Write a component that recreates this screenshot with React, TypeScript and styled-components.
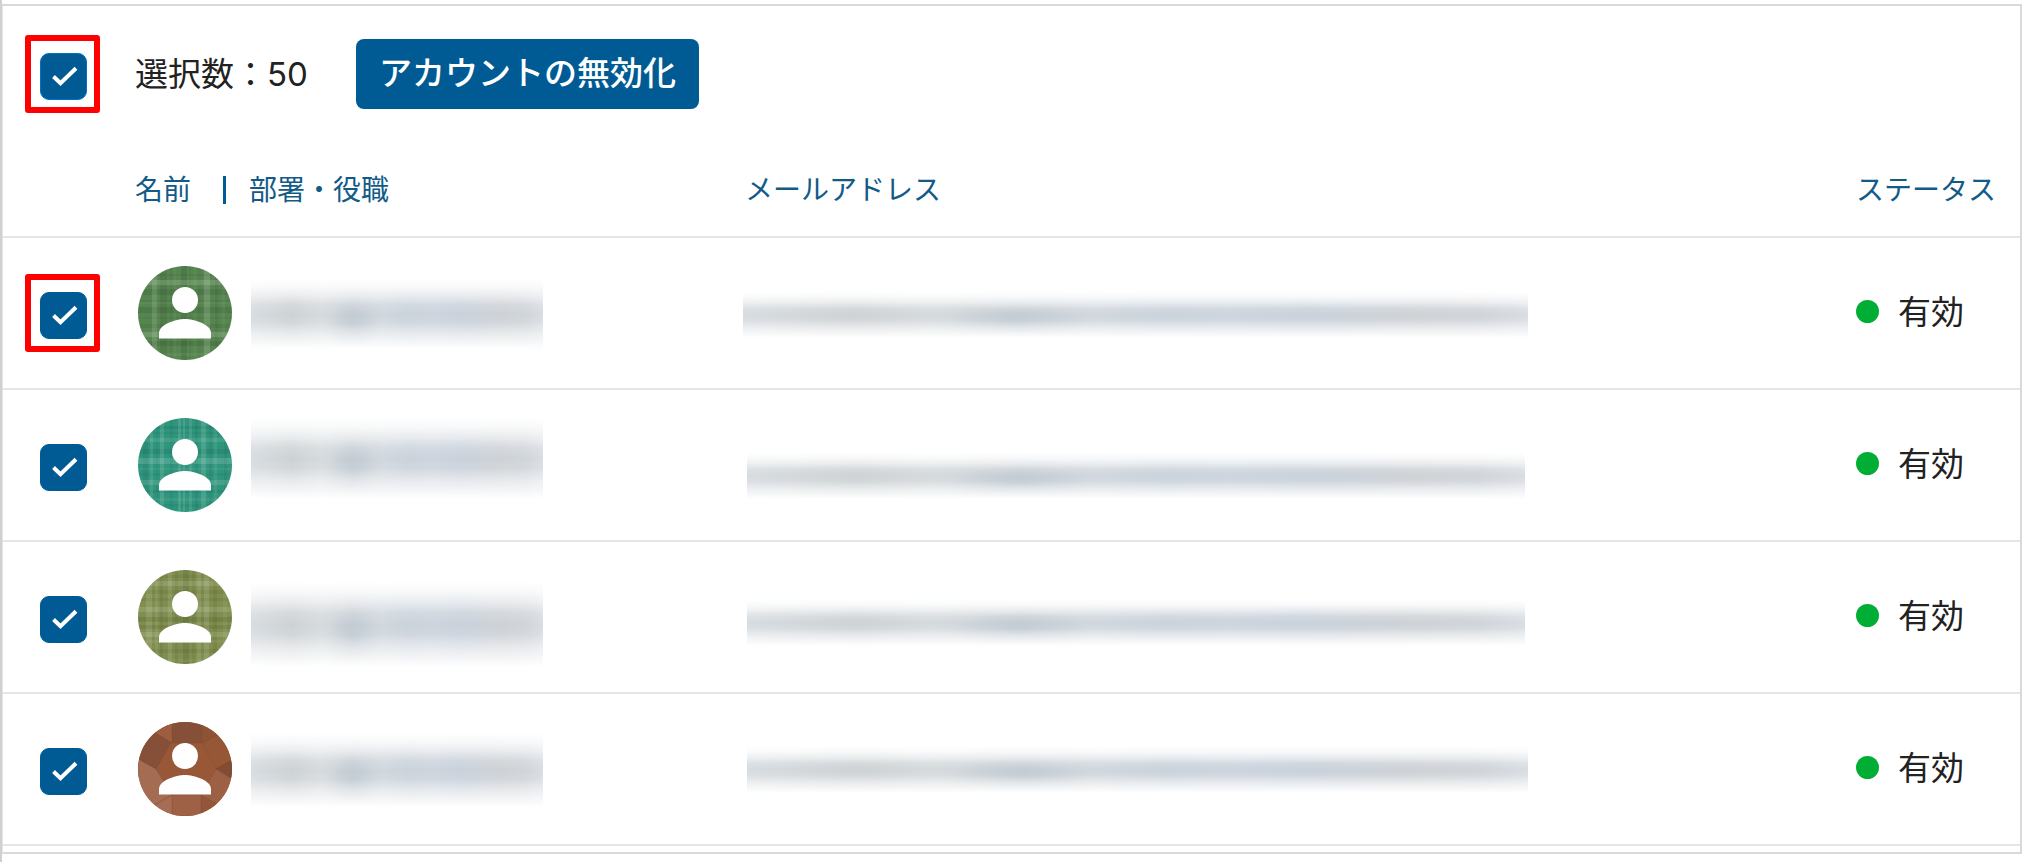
import React, { useState } from "react";
import styled, { createGlobalStyle, css } from "styled-components";

const GlobalStyle = createGlobalStyle`
  *, *::before, *::after { box-sizing: border-box; }
  body {
    margin: 0;
    background: #fff;
    color: #222;
    font-family: Inter, "Noto Sans CJK JP", sans-serif;
    font-size: 33px;
    line-height: 48px;
  }
`;

const Page = styled.main`
  min-height: 100vh;
  padding: 4px 6px 8px 0;
  border-left: 2px solid #d0d0d0;
`;

const Panel = styled.section`
  border: 2px solid #d9d9d9;
  border-left: 1px solid #e4e4e4;
  padding-bottom: 6px;
`;

const Toolbar = styled.div`
  display: flex;
  align-items: center;
  padding: 33px 24px 35px 0;
`;

const CheckColumn = styled.div`
  flex: none;
  width: 132px;
  padding: 4px 0 0 37px;
`;

const SelectionCount = styled.p`
  margin: 0 48px 0 0;
`;

const PrimaryButton = styled.button`
  height: 70px;
  padding: 0 23px 2px;
  border: 0;
  border-radius: 8px;
  background: #005b94;
  color: #fff;
  font: inherit;
  font-weight: 500;
  cursor: pointer;
`;

const Tick = styled.label<{ $marked?: boolean }>`
  position: relative;
  display: block;
  width: 47px;
  height: 47px;

  ${(p) =>
    p.$marked &&
    css`
      &::after {
        content: "";
        position: absolute;
        inset: -18px -13px -13px -15px;
        border: 6px solid #f00;
        border-radius: 3px;
        pointer-events: none;
      }
    `}
`;

const TickInput = styled.input<{ $focused?: boolean }>`
  display: block;
  appearance: none;
  width: 47px;
  height: 47px;
  margin: 0;
  border: 1px solid ${(p) => (p.$focused ? "#0070c4" : "#005b94")};
  border-radius: 9px;
  background: #fff;
  cursor: pointer;

  &:checked { background: #005b94; }
`;

const TickMark = styled.svg`
  position: absolute;
  inset: 0;
  pointer-events: none;
`;

const UserTable = styled.table`
  width: 100%;
  border-collapse: separate;
  border-spacing: 0;
  table-layout: fixed;
`;

const Column = styled.col<{ $width?: number }>`
  width: ${(p) => (p.$width ? `${p.$width}px` : "auto")};
`;

const HeadCell = styled.th`
  height: 94px;
  padding: 0;
  border-bottom: 2px solid #e5e5e5;
  color: #125a87;
  font-size: 28px;
  font-weight: 400;
  text-align: left;
  white-space: nowrap;
`;

const HeadGroup = styled.div`
  display: flex;
  align-items: center;
  gap: 32px;

  span + span::before {
    content: "";
    display: inline-block;
    width: 3px;
    height: 28px;
    margin-right: 23px;
    background: #005b94;
    vertical-align: -4px;
  }
`;

const Cell = styled.td`
  height: 152px;
  padding: 0;
  border-bottom: 2px solid #e5e5e5;
`;

const Person = styled.div`
  display: flex;
  align-items: center;
  gap: 19px;
  padding-left: 3px;
`;

const AvatarSvg = styled.svg`
  flex: none;
  display: block;
`;

const Redacted = styled.div<{ $width: number; $height: number; $shift: number; $indent?: number }>`
  width: ${(p) => p.$width}px;
  max-width: 100%;
  height: ${(p) => p.$height}px;
  margin-top: ${(p) => p.$shift}px;
  margin-left: ${(p) => p.$indent ?? 0}px;
  background:
    radial-gradient(ellipse 9% 42% at 35% 70%, rgba(176, 190, 202, 0.5), transparent),
    linear-gradient(90deg, #d7dce0, #cdd2d5 14%, #d5dadd 24%, #cbd1d7 35%, #d0d7dd 45%,
      #cad2db 54%, #cdd4dd 62%, #c9d1db 71%, #ced2d6 86%, #d0d5da 94%, #d9dde3);
  mask-image: linear-gradient(transparent 2%, rgba(0, 0, 0, 0.14) 14%, rgba(0, 0, 0, 0.46) 27%,
    rgba(0, 0, 0, 0.86) 39%, #000 52%, rgba(0, 0, 0, 0.9) 63%, rgba(0, 0, 0, 0.5) 77%,
    rgba(0, 0, 0, 0.22) 90%, transparent);
`;

const Status = styled.div`
  display: flex;
  align-items: center;
  gap: 19px;
  padding-bottom: 3px;
  white-space: nowrap;

  &::before {
    content: "";
    width: 23px;
    height: 23px;
    border-radius: 50%;
    background: #00ad35;
  }
`;

type Stripe = [position: number, width: number, opacity: number];

interface Plaid {
  base: string;
  dark: string;
  lightColumns: Stripe[];
  darkColumns: Stripe[];
  lightRows: Stripe[];
  darkRows: Stripe[];
}

interface User {
  id: string;
  plaid?: Plaid;
  name: { height: number; shift: number };
  email: { width: number; height: number; shift: number; indent: number };
}

const users: User[] = [
  {
    id: "u1",
    plaid: {
      base: "#578550",
      dark: "#2f4a2e",
      lightColumns: [[14, 5, 0.12], [66, 6, 0.14], [36, 2, 0.04], [56, 2, 0.04], [84, 3, 0.05]],
      darkColumns: [[22, 7, 0.14], [43, 6, 0.2], [32, 2, 0.1], [51, 2, 0.1], [60, 3, 0.08], [77, 3, 0.12]],
      lightRows: [[14, 5, 0.14], [66, 5, 0.14], [36, 2, 0.04], [87, 3, 0.05]],
      darkRows: [[23, 6, 0.2], [41, 6, 0.2], [34, 2, 0.12], [51, 2, 0.1], [58, 4, 0.15], [75, 5, 0.2], [8, 2, 0.12]],
    },
    name: { height: 72, shift: 0 },
    email: { width: 785, height: 48, shift: 2, indent: -2 },
  },
  {
    id: "u2",
    plaid: {
      base: "#2f957c",
      dark: "#17614f",
      lightColumns: [[12, 3, 0.1], [22, 4, 0.12], [40, 3, 0.12], [45, 2, 0.12], [51, 3, 0.1], [63, 5, 0.13], [76, 3, 0.08]],
      darkColumns: [[5, 5, 0.16], [18, 2, 0.1], [32, 3, 0.1], [57, 3, 0.16], [71, 3, 0.12], [86, 3, 0.12]],
      lightRows: [[20, 4, 0.1], [40, 6, 0.14], [62, 5, 0.12], [50, 2, 0.06], [80, 3, 0.06]],
      darkRows: [[8, 3, 0.2], [14, 2, 0.12], [31, 5, 0.2], [55, 3, 0.1], [72, 3, 0.15], [86, 3, 0.12]],
    },
    name: { height: 84, shift: -16 },
    email: { width: 778, height: 48, shift: 20, indent: 2 },
  },
  {
    id: "u3",
    plaid: {
      base: "#808f50",
      dark: "#4b562a",
      lightColumns: [[8, 6, 0.11], [17, 3, 0.08], [30, 4, 0.1], [59, 4, 0.1], [66, 5, 0.12], [85, 4, 0.06]],
      darkColumns: [[22, 3, 0.14], [37, 3, 0.12], [45, 6, 0.2], [54, 3, 0.12], [75, 4, 0.15]],
      lightRows: [[11, 5, 0.12], [37, 5, 0.12], [62, 5, 0.12], [70, 3, 0.06], [89, 3, 0.05]],
      darkRows: [[5, 3, 0.12], [20, 4, 0.15], [28, 3, 0.15], [47, 5, 0.24], [55, 4, 0.2], [79, 4, 0.15]],
    },
    name: { height: 88, shift: 12 },
    email: { width: 778, height: 48, shift: 10, indent: 2 },
  },
  {
    id: "u4",
    name: { height: 76, shift: 0 },
    email: { width: 781, height: 48, shift: 0, indent: 2 },
  },
];

function PlaidFill({ plaid }: { plaid: Plaid }) {
  return (
    <>
      <rect width="94" height="94" fill={plaid.base} />
      {plaid.darkColumns.map(([x, w, o]) => (
        <rect key={`dc${x}`} x={x} width={w} height="94" fill={plaid.dark} opacity={o} />
      ))}
      {plaid.darkRows.map(([y, h, o]) => (
        <rect key={`dr${y}`} y={y} width="94" height={h} fill={plaid.dark} opacity={o} />
      ))}
      {plaid.lightColumns.map(([x, w, o]) => (
        <rect key={`lc${x}`} x={x} width={w} height="94" fill="#fff" opacity={o} />
      ))}
      {plaid.lightRows.map(([y, h, o]) => (
        <rect key={`lr${y}`} y={y} width="94" height={h} fill="#fff" opacity={o} />
      ))}
    </>
  );
}

function FacetFill() {
  return (
    <g stroke="#7f4a32" strokeOpacity="0.35" strokeWidth="1">
      <rect width="94" height="94" fill="#985838" />
      <path d="M34 0H64V21H34Z" fill="#855037" />
      <path d="M17 11 34 0V21Z" fill="#9c5d41" />
      <path d="M17 11 33 21 18 47 0 37V11Z" fill="#855037" />
      <path d="M64 0 83 11 64 21Z" fill="#8e5336" />
      <path d="M83 11 94 11V38L78 47 64 21Z" fill="#965737" />
      <path d="M78 47 94 38V57Z" fill="#824c34" />
      <path d="M78 47 94 57V94H83L63 73Z" fill="#9d6045" />
      <path d="M63 73 83 84 63 94Z" fill="#94563a" />
      <path d="M34 73H63V94H34Z" fill="#9e6146" />
      <path d="M0 37 18 47 34 73 15 84 0 94Z" fill="#a46c53" />
      <path d="M15 84 34 73V94H15Z" fill="#a56d55" />
    </g>
  );
}

function Avatar({ user }: { user: User }) {
  const clip = `avatar-${user.id}`;
  return (
    <AvatarSvg width="94" height="94" viewBox="0 0 94 94" aria-hidden="true">
      <clipPath id={clip}>
        <circle cx="47" cy="47" r="47" />
      </clipPath>
      <g clipPath={`url(#${clip})`}>{user.plaid ? <PlaidFill plaid={user.plaid} /> : <FacetFill />}</g>
      <circle cx="47" cy="34" r="13" fill="#fff" />
      <path d="M21 72.5V67C21 58.5 38 53 47 53S73 58.5 73 67V72.5Z" fill="#fff" />
    </AvatarSvg>
  );
}

interface CheckBoxProps {
  label: string;
  checked: boolean;
  onChange: () => void;
  marked?: boolean;
  focused?: boolean;
}

function CheckBox({ label, checked, onChange, marked, focused }: CheckBoxProps) {
  return (
    <Tick $marked={marked}>
      <TickInput type="checkbox" aria-label={label} checked={checked} onChange={onChange} $focused={focused} />
      {checked && (
        <TickMark width="47" height="47" viewBox="0 0 47 47" fill="none" aria-hidden="true">
          <path d="M13.5 23.5 20.5 30.3 36 15.2" stroke="#fff" strokeWidth="4" />
        </TickMark>
      )}
    </Tick>
  );
}

export default function App() {
  const [unchecked, setUnchecked] = useState<string[]>([]);
  const toggle = (id: string) =>
    setUnchecked((ids) => (ids.includes(id) ? ids.filter((i) => i !== id) : [...ids, id]));
  const toggleAll = () => setUnchecked((ids) => (ids.length ? [] : users.map((u) => u.id)));

  return (
    <>
      <GlobalStyle />
      <Page>
        <Panel>
          <Toolbar>
            <CheckColumn>
              <CheckBox label="すべて選択" checked={unchecked.length === 0} onChange={toggleAll} marked focused />
            </CheckColumn>
            <SelectionCount>選択数：{50 - unchecked.length}</SelectionCount>
            <PrimaryButton type="button">アカウントの無効化</PrimaryButton>
          </Toolbar>
          <UserTable>
            <colgroup>
              <Column $width={132} />
              <Column $width={610} />
              <Column />
              <Column $width={164} />
            </colgroup>
            <thead>
              <tr>
                <HeadCell as="td" />
                <HeadCell scope="col">
                  <HeadGroup>
                    <span>名前</span>
                    <span>部署・役職</span>
                  </HeadGroup>
                </HeadCell>
                <HeadCell scope="col">メールアドレス</HeadCell>
                <HeadCell scope="col">ステータス</HeadCell>
              </tr>
            </thead>
            <tbody>
              {users.map((user, index) => (
                <tr key={user.id}>
                  <Cell>
                    <CheckColumn>
                      <CheckBox
                        label={`ユーザー${index + 1}を選択`}
                        checked={!unchecked.includes(user.id)}
                        onChange={() => toggle(user.id)}
                        marked={index === 0}
                      />
                    </CheckColumn>
                  </Cell>
                  <Cell>
                    <Person>
                      <Avatar user={user} />
                      <Redacted $width={292} $height={user.name.height} $shift={user.name.shift} />
                    </Person>
                  </Cell>
                  <Cell>
                    <Redacted
                      $width={user.email.width}
                      $height={user.email.height}
                      $shift={user.email.shift}
                      $indent={user.email.indent}
                    />
                  </Cell>
                  <Cell>
                    <Status>有効</Status>
                  </Cell>
                </tr>
              ))}
            </tbody>
          </UserTable>
        </Panel>
      </Page>
    </>
  );
}
